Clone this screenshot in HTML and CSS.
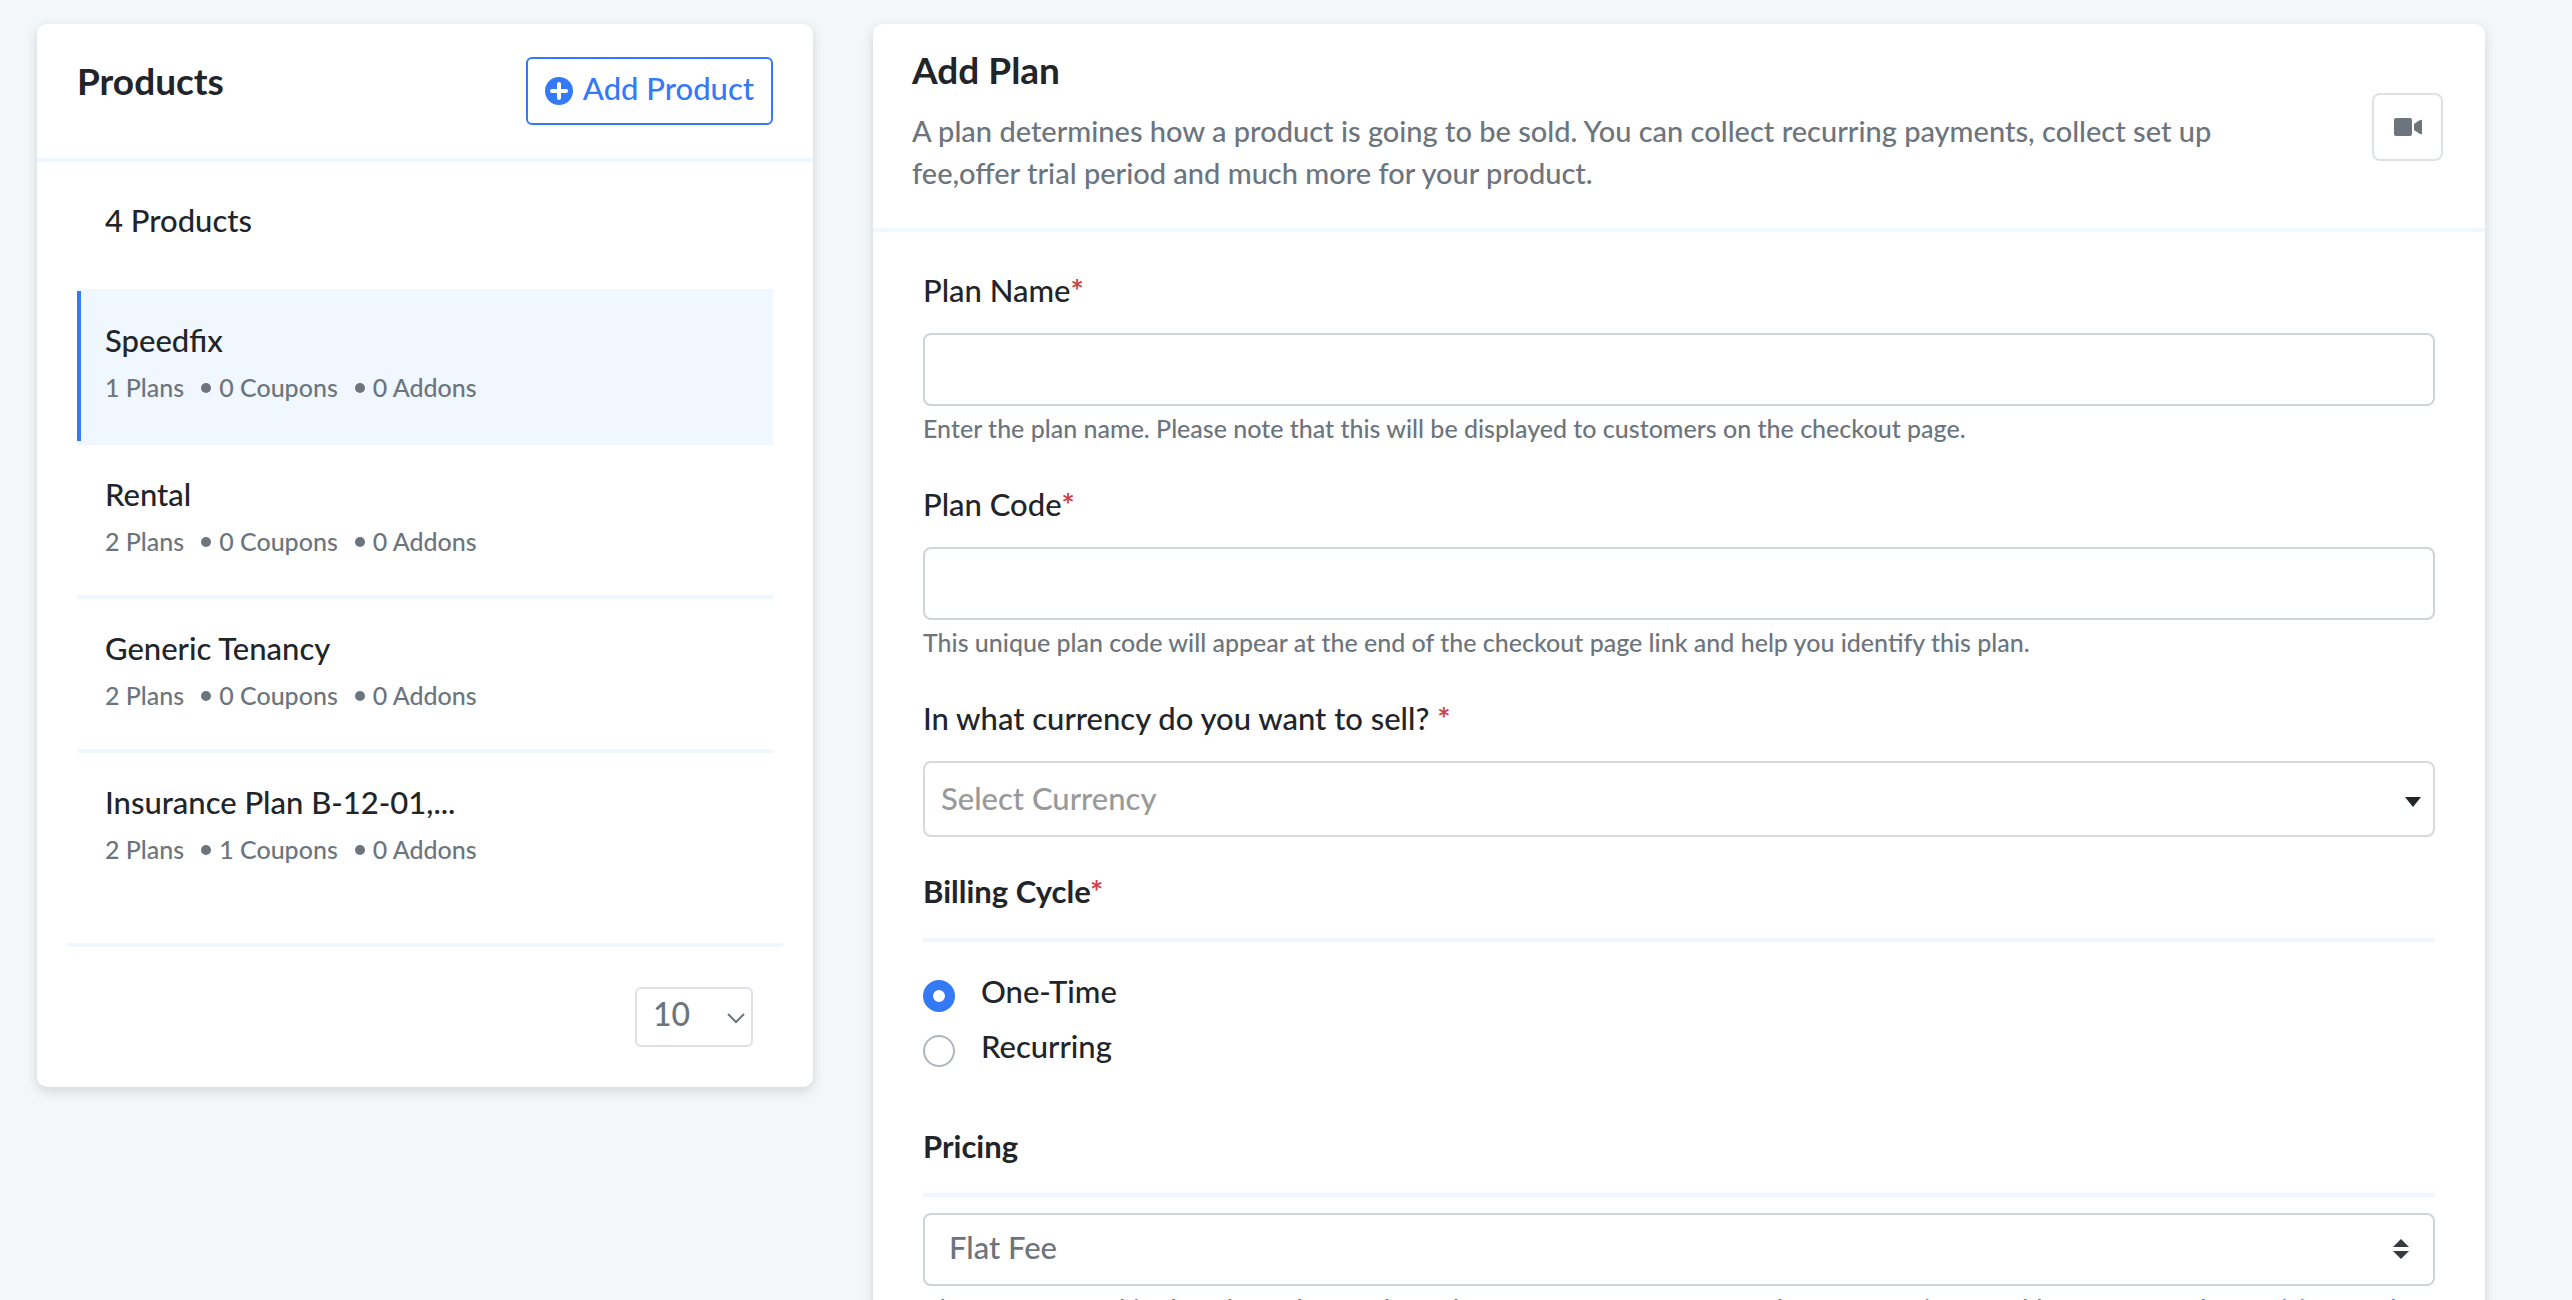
FILE: index.html
```html
<!DOCTYPE html>
<html lang="en">
<head>
<meta charset="utf-8">
<title>Add Plan</title>
<link rel="stylesheet" href="styles.css">
</head>
<body>
<main class="layout">
  <section class="card products">
    <header class="products-head">
      <h1 class="title">Products</h1>
      <button type="button" class="btn-add">
        <svg class="icon-plus" viewBox="0 0 28 28" aria-hidden="true"><circle cx="14" cy="14" r="14"/><path d="M14 7v14M7 14h14"/></svg>
        <span>Add Product</span>
      </button>
    </header>
    <div class="products-body">
      <p class="count">4 Products</p>
      <ul class="list">
        <li class="item item-active">
          <a class="item-link" href="#"><span class="name">Speedfix</span>
          <span class="meta"><span>1 Plans</span><span class="dot">0 Coupons</span><span class="dot">0 Addons</span></span></a>
        </li>
        <li class="item">
          <a class="item-link" href="#"><span class="name">Rental</span>
          <span class="meta"><span>2 Plans</span><span class="dot">0 Coupons</span><span class="dot">0 Addons</span></span></a>
        </li>
        <li class="item">
          <a class="item-link" href="#"><span class="name">Generic Tenancy</span>
          <span class="meta"><span>2 Plans</span><span class="dot">0 Coupons</span><span class="dot">0 Addons</span></span></a>
        </li>
        <li class="item">
          <a class="item-link" href="#"><span class="name">Insurance Plan B-12-01,...</span>
          <span class="meta"><span>2 Plans</span><span class="dot">1 Coupons</span><span class="dot">0 Addons</span></span></a>
        </li>
      </ul>
    </div>
    <footer class="products-foot">
      <div class="pager">
        <select class="page-size" aria-label="Products per page"><option>10</option></select>
        <svg class="pager-arrow" viewBox="0 0 18 12" aria-hidden="true"><path d="M1 2l8 8 8-8"/></svg>
      </div>
    </footer>
  </section>

  <section class="card plan">
    <header class="plan-head">
      <div class="plan-intro">
        <h2 class="title">Add Plan</h2>
        <p class="lead">A plan determines how a product is going to be sold. You can collect recurring payments, collect set up<br>fee,offer trial period and much more for your product.</p>
      </div>
      <button type="button" class="btn-video" aria-label="Watch video">
        <svg class="icon-video" viewBox="0 0 28 18" aria-hidden="true"><path d="M2 0h14q2 0 2 2v14q0 2-2 2H2q-2 0-2-2V2Q0 0 2 0zM20 6l6-4q2-1 2 1v12q0 2-2 1l-6-4z"/></svg>
      </button>
    </header>
    <form class="form">
      <div class="field">
        <label class="label" for="plan-name">Plan Name<span class="req">*</span></label>
        <input class="control" type="text" id="plan-name">
        <p class="help">Enter the plan name. Please note that this will be displayed to customers on the checkout page.</p>
      </div>
      <div class="field">
        <label class="label" for="plan-code">Plan Code<span class="req">*</span></label>
        <input class="control" type="text" id="plan-code">
        <p class="help">This unique plan code will appear at the end of the checkout page link and help you identify this plan.</p>
      </div>
      <div class="field field-last">
        <label class="label" for="currency">In what currency do you want to sell? <span class="req">*</span></label>
        <div class="picker">
          <select class="control control-currency" id="currency"><option>Select Currency</option></select>
          <svg class="arrow-down" viewBox="0 0 16 10" aria-hidden="true"><path d="M0 0h16l-8 10z"/></svg>
        </div>
      </div>
      <fieldset class="group">
        <legend class="group-title">Billing Cycle<span class="req">*</span></legend>
        <div class="radios">
          <label class="radio"><input type="radio" name="cycle" checked><span>One-Time</span></label>
          <label class="radio"><input type="radio" name="cycle"><span>Recurring</span></label>
        </div>
      </fieldset>
      <fieldset class="group">
        <legend class="group-title">Pricing</legend>
        <div class="picker picker-pricing">
          <select class="control control-pricing" aria-label="Pricing"><option>Flat Fee</option></select>
          <svg class="arrow-both" viewBox="0 0 16 20" aria-hidden="true"><path d="M0 8h16L8 0zM0 12h16l-8 8z"/></svg>
        </div>
        <p class="help">Choose a fee for this plan, charged for each purchase on your page, no matter how many units are sold. <a class="help-link" href="#">Know more about pricing for plans</a></p>
      </fieldset>
    </form>
  </section>
</main>
</body>
</html>
```
FILE: styles.css
```css
* { box-sizing: border-box; }

body {
  margin: 0;
  background: #f3f7fa;
  color: #212529;
  font-family: Lato, "Noto Sans", sans-serif;
  font-size: 31px;
  font-weight: 500;
  line-height: 44px;
}

h1, h2, p, ul, fieldset, legend { margin: 0; padding: 0; border: 0; }
ul { list-style: none; }
a { color: inherit; text-decoration: none; }
button, input, select { font: inherit; color: inherit; }
svg { display: block; }

.layout {
  display: grid;
  grid-template-columns: 776fr 1612fr;
  gap: 60px;
  align-items: start;
  padding: 24px 87px 0 37px;
  height: 100vh;
  overflow: hidden;
}

.card {
  background: #fff;
  border-radius: 10px;
  box-shadow: 0 4px 12px rgba(33, 37, 41, .16);
}

.title { font-size: 37px; line-height: 44px; font-weight: 700; }

.products-head {
  display: flex;
  justify-content: space-between;
  align-items: flex-start;
  padding: 33px 40px;
  border-bottom: 4px solid #f0f7ff;
}
.products-head .title { padding-top: 2px; }

.btn-add {
  display: flex;
  align-items: center;
  gap: 10px;
  height: 68px;
  padding: 0 17px;
  border: 2px solid #347af6;
  border-radius: 6px;
  background: #fff;
  color: #347af6;
}
.btn-add span { padding-bottom: 6px; }
.icon-plus { width: 28px; height: 28px; fill: #347af6; stroke: #fff; stroke-width: 4; stroke-linecap: round; }
.icon-plus circle { stroke: none; }

.products-body { padding: 36px 40px 0; }
.count { padding: 0 28px 47px; }

.item { border-bottom: 4px solid #f0f7ff; height: 154px; }
.item:first-child { height: 156px; }
.item:last-child { border: 0; }
.item-link { display: block; height: 150px; padding: 25px 24px; border-left: 4px solid transparent; }
.item-active { background: #f0f7ff; padding-top: 2px; }
.item-active .item-link { border-color: #347af6; }
.name { display: block; line-height: 48px; }
.meta { display: flex; gap: 17px; font-size: 25px; line-height: 46px; color: #6c757d; }
.dot::before {
  content: "";
  display: inline-block;
  width: 10px;
  height: 10px;
  margin-right: 8px;
  border-radius: 50%;
  background: #6c757d;
  vertical-align: 4px;
}

.products-foot {
  display: flex;
  justify-content: flex-end;
  margin: 36px 30px 0;
  padding: 40px 30px;
  border-top: 4px solid #f0f7ff;
}
.pager, .picker { position: relative; }
.page-size {
  display: block;
  appearance: none;
  width: 118px;
  height: 60px;
  padding: 0 16px 6px;
  border: 2px solid #dee2e6;
  border-radius: 6px;
  background: #fff;
  color: #6c757d;
  font-size: 32px;
}
.pager-arrow { position: absolute; right: 8px; top: 25px; width: 18px; height: 12px; fill: none; stroke: #6c757d; stroke-width: 2; }

.plan-head {
  display: flex;
  justify-content: space-between;
  align-items: center;
  padding: 2px 42px 0 39px;
  border-bottom: 4px solid #f0f7ff;
}
.plan-intro { padding: 22px 0 34px; }
.lead { padding-top: 18px; font-size: 29px; line-height: 42px; color: #6c757d; }
.btn-video {
  display: grid;
  place-items: center;
  width: 71px;
  height: 68px;
  border: 2px solid #dee2e6;
  border-radius: 8px;
  background: #fff;
}
.icon-video { width: 28px; height: 18px; fill: #6c757d; }

.form { padding: 36px 50px; }
.field { padding-bottom: 37px; }
.field-last { padding-bottom: 32px; }
.label { display: block; padding-bottom: 21px; }
.req { color: #cb444a; font-weight: 700; }
.control {
  display: block;
  width: 100%;
  height: 73px;
  border: 2px solid #ced4da;
  border-radius: 8px;
  background: #fff;
  appearance: none;
}
.help { padding-top: 5px; font-size: 25px; line-height: 34px; color: #6c757d; }
.help-link { color: #347af6; }
.control-currency { height: 76px; padding: 0 16px 2px; border-color: #d9d9d9; color: #999; }
.arrow-down { position: absolute; right: 14px; top: 36px; width: 16px; height: 10px; fill: #212529; }
.control-pricing { padding: 0 24px 6px; color: #6c757d; }
.arrow-both { position: absolute; right: 26px; top: 42px; width: 16px; height: 20px; fill: #343a40; }

.group-title { display: block; width: 100%; padding-bottom: 25px; border-bottom: 4px solid #f0f7ff; font-weight: 700; }
.radios { padding: 26px 0 46px; }
.radio { display: flex; align-items: center; gap: 26px; height: 55px; }
.radio input {
  appearance: none;
  width: 32px;
  height: 32px;
  margin: 0;
  border: 2px solid #adb5bd;
  border-radius: 50%;
}
.radio input:checked { border: 10px solid #347af6; }
.radio span { padding-bottom: 10px; }
.picker-pricing { padding-top: 16px; }
```
